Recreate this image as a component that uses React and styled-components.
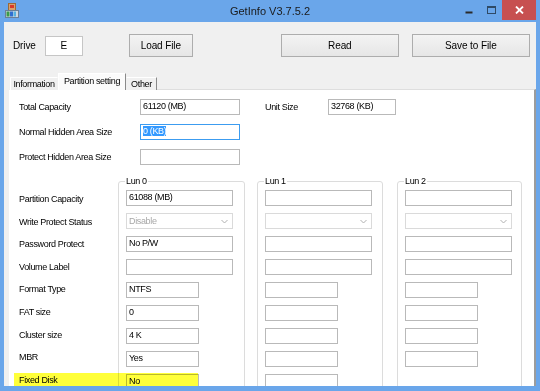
import React from 'react';
import styled, { createGlobalStyle } from 'styled-components';

const Global = createGlobalStyle`
  html, body { margin: 0; padding: 0; }
  body {
    width: 540px; height: 391px; overflow: hidden;
    background: #6aa6ea;
    font-family: "Liberation Sans", Arial, sans-serif;
  }
`;

const Window = styled.div`
  width: 540px; height: 391px; box-sizing: border-box;
  background: #6aa6ea;
  padding: 0 4px 5px 4px;
  display: flex; flex-direction: column;
`;

const TitleBar = styled.div`
  height: 22px; flex: none;
  display: grid; grid-template-columns: 1fr auto 1fr;
  align-items: start;
`;

const AppIcon = styled.svg`
  margin: 3px 0 0 1px; display: block;
`;

const TitleText = styled.div`
  font-size: 11px; line-height: 22px; color: #1a1a1a;
`;

const Controls = styled.div`
  display: flex; justify-content: flex-end; align-items: flex-start;
`;

const CtrlButton = styled.div`
  width: ${p => p.$w}px; height: 20px;
  display: flex; align-items: center; justify-content: center;
  background: ${p => p.$bg || 'transparent'};
`;

const Client = styled.div`
  flex: 1; min-height: 0;
  background: #f0f0f0;
  display: flex; flex-direction: column;
  overflow: hidden;
`;

const Toolbar = styled.div`
  display: flex; align-items: center;
  height: 23px; margin-top: 12px; padding-left: 9px; flex: none;
`;

const DriveLabel = styled.span`
  font-size: 10px; color: #000; letter-spacing: -0.1px;
`;

const DriveBox = styled.div`
  width: 38px; height: 20px; box-sizing: border-box;
  margin-left: 9px;
  border: 1px solid #c6c6c6; background: #fff;
  font-size: 10px; line-height: 18px; text-align: center; color: #000;
`;

const Button = styled.div`
  width: ${p => p.$w}px; height: 23px; box-sizing: border-box;
  margin-left: ${p => p.$ml}px;
  border: 1px solid #adadad;
  background: linear-gradient(#f3f3f3, #e6e6e6);
  font-size: 10px; letter-spacing: -0.1px; color: #000;
  display: flex; align-items: center; justify-content: center;
`;

const TabStrip = styled.div`
  display: flex; align-items: flex-end;
  margin-top: 16px; padding-left: 6px;
  height: 17px; margin-bottom: -1px;
  position: relative; z-index: 1; flex: none;
`;

const Tab = styled.div`
  box-sizing: border-box;
  width: ${p => p.$w}px;
  height: ${p => (p.$active ? 17 : 13)}px;
  text-align: center;
  font-size: 9px; letter-spacing: -0.35px; color: #000;
  line-height: ${p => (p.$active ? 14 : 12)}px;
  background: ${p => (p.$active ? '#fbfbfb' : '#f0f0f0')};
  border-top: 1px solid #fff;
  border-left: 1px solid ${p => (p.$active || p.$first ? '#fff' : 'transparent')};
  border-right: 1px solid ${p => (p.$shadow ? '#8a8a8a' : 'transparent')};
  white-space: nowrap;
`;

const Panel = styled.div`
  flex: 1; min-height: 0;
  margin-left: 5px;
  position: relative; overflow: hidden;
  background: #fff;
  border-top: 1px solid #dedede;
  border-left: 1px solid #fff;
  border-right: 2px solid #9c9c9c;
  padding: 9px 0 0 9px;
`;

const TopGrid = styled.div`
  display: grid;
  grid-template-columns: 121px 100px 25px 63px 68px;
  grid-auto-rows: 16px;
  row-gap: 9px;
  align-items: center;
`;

const Label = styled.div`
  font-size: 9px; letter-spacing: -0.35px; color: #000;
  line-height: 12px; height: 12px; white-space: nowrap;
  grid-column: ${p => p.$col || 'auto'};
`;

const TextBox = styled.div`
  width: ${p => p.$w}px; height: 16px; box-sizing: border-box;
  border: 1px solid ${p => (p.$focus ? '#3c9cf0' : '#b9b9b9')};
  background: #fff;
  padding: 1px 2px 0 2px;
  font-size: 9px; letter-spacing: -0.35px; color: #000;
  line-height: 11px; white-space: nowrap; overflow: hidden;
  grid-column: ${p => p.$col || 'auto'};
`;

const Selected = styled.span`
  background: #3399ff; color: #fff;
`;

const SelectBox = styled.div`
  width: ${p => p.$w}px; height: 16px; box-sizing: border-box;
  border: 1px solid #dadada; background: #fff;
  padding: 0 4px 0 2px;
  display: flex; align-items: center; justify-content: space-between;
  font-size: 9px; letter-spacing: -0.35px; color: #a8a8a8;
`;

const LunSection = styled.div`
  display: flex; align-items: flex-start;
  margin-top: 10px;
`;

const LabelColumn = styled.div`
  width: 99px; flex: none;
  display: flex; flex-direction: column; gap: 10.6px;
  padding-top: 18px;
`;

const GroupBox = styled.fieldset`
  box-sizing: border-box; flex: none;
  width: ${p => p.$w}px; min-height: 260px;
  margin: 0 0 0 ${p => p.$ml}px;
  padding: 3px 6px 0 7px;
  border: 1px solid #dcdcdc; border-radius: 3px;
  min-inline-size: 0;
`;

const GroupTitle = styled.legend`
  font-size: 9px; letter-spacing: -0.35px; color: #000;
  line-height: 12px; padding: 0 1px; margin-left: -1px;
`;

const FieldColumn = styled.div`
  display: flex; flex-direction: column; gap: 7px;
`;

const Highlight = styled.div`
  position: absolute; left: 4px; top: 283px;
  width: 184px; height: 30px;
  background: #ffff3a; mix-blend-mode: multiply;
  pointer-events: none;
`;

const Chevron = () => (
  <svg width="7" height="5" viewBox="0 0 7 5">
    <path d="M0.5 1 L3.5 4 L6.5 1" fill="none" stroke="#b0b0b0" strokeWidth="1" />
  </svg>
);

const lunLabels = [
  'Partition Capacity', 'Write Protect Status', 'Password Protect', 'Volume Label',
  'Format Type', 'FAT size', 'Cluster size', 'MBR', 'Fixed Disk',
];

const lun0 = ['61088 (MB)', null, 'No P/W', '', 'NTFS', '0', '4 K', 'Yes', 'No'];

const LunFields = ({ values, rows, wp }) => (
  <FieldColumn>
    {Array.from({ length: rows }).map((_, i) => {
      const v = values ? values[i] : '';
      if (i === 1) {
        return (
          <SelectBox key={i} $w={107}>
            <span>{wp || ''}</span>
            <Chevron />
          </SelectBox>
        );
      }
      return <TextBox key={i} $w={i < 4 ? 107 : 73}>{v}</TextBox>;
    })}
  </FieldColumn>
);

export default function App() {
  return (
    <>
      <Global />
      <Window>
        <TitleBar>
          <div>
            <AppIcon width="14" height="15" viewBox="0 0 14 15">
              <rect x="3.5" y="0.5" width="7" height="7" fill="#d9a06a" stroke="#9a6a3a" strokeWidth="1" />
              <rect x="5" y="2" width="4" height="3" fill="#d83a2a" />
              <rect x="0.5" y="7.5" width="13" height="7" fill="#cfd8e0" stroke="#6a7f98" strokeWidth="1" />
              <rect x="1.5" y="8.5" width="3" height="5" fill="#3a9a4a" />
              <rect x="5" y="8.5" width="3" height="5" fill="#2f6fd0" />
              <rect x="8.5" y="8.5" width="2.5" height="5" fill="#55b0e0" />
            </AppIcon>
          </div>
          <TitleText>GetInfo V3.7.5.2</TitleText>
          <Controls>
            <CtrlButton $w={22}>
              <svg width="8" height="8" viewBox="0 0 8 8">
                <rect x="0.5" y="5.5" width="7" height="2" fill="#2a2a2a" />
              </svg>
            </CtrlButton>
            <CtrlButton $w={22}>
              <svg width="9" height="8" viewBox="0 0 9 8">
                <rect x="0.5" y="0.5" width="8" height="7" fill="none" stroke="#2f4a66" strokeWidth="1" />
                <rect x="0.5" y="0.5" width="8" height="1.5" fill="#2f4a66" />
              </svg>
            </CtrlButton>
            <CtrlButton $w={34} $bg="#c75050">
              <svg width="9" height="8" viewBox="0 0 9 8">
                <path d="M1 0.5 L8 7.5 M8 0.5 L1 7.5" stroke="#fff" strokeWidth="1.8" />
              </svg>
            </CtrlButton>
          </Controls>
        </TitleBar>
        <Client>
          <Toolbar>
            <DriveLabel>Drive</DriveLabel>
            <DriveBox>E</DriveBox>
            <Button $w={64} $ml={46}>Load File</Button>
            <Button $w={118} $ml={88}>Read</Button>
            <Button $w={118} $ml={13}>Save to File</Button>
          </Toolbar>
          <TabStrip>
            <Tab $first $w={48}>Information</Tab>
            <Tab $active $shadow $w={68}>Partition setting</Tab>
            <Tab $shadow $w={31}>Other</Tab>
          </TabStrip>
          <Panel>
            <TopGrid>
              <Label>Total Capacity</Label>
              <TextBox $w={100}>61120 (MB)</TextBox>
              <Label $col={4}>Unit Size</Label>
              <TextBox $w={68} $col={5}>32768 (KB)</TextBox>
              <Label>Normal Hidden Area Size</Label>
              <TextBox $w={100} $focus><Selected>0 (KB)</Selected></TextBox>
              <Label $col={1}>Protect Hidden Area Size</Label>
              <TextBox $w={100}></TextBox>
            </TopGrid>
            <LunSection>
              <LabelColumn>
                {lunLabels.map(l => <Label key={l}>{l}</Label>)}
              </LabelColumn>
              <GroupBox $w={127} $ml={0}>
                <GroupTitle>Lun 0</GroupTitle>
                <LunFields values={lun0} rows={9} wp="Disable" />
              </GroupBox>
              <GroupBox $w={126} $ml={12}>
                <GroupTitle>Lun 1</GroupTitle>
                <LunFields rows={9} />
              </GroupBox>
              <GroupBox $w={125} $ml={14}>
                <GroupTitle>Lun 2</GroupTitle>
                <LunFields rows={8} />
              </GroupBox>
            </LunSection>
            <Highlight />
          </Panel>
        </Client>
      </Window>
    </>
  );
}
